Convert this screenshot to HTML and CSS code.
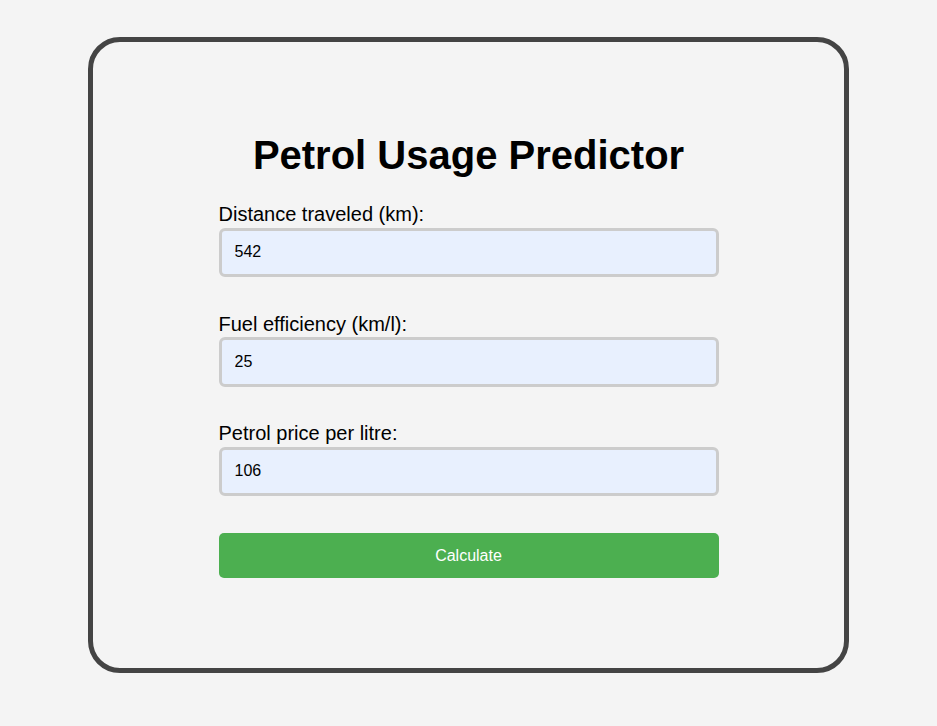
FILE: index.html
```html
<!DOCTYPE html>
<html lang="en">
<head>
<meta charset="utf-8">
<title>Petrol Usage Predictor</title>
<link rel="stylesheet" href="styles.css">
</head>
<body>
<main class="card">
  <form class="form">
    <h1 class="title">Petrol Usage Predictor</h1>
    <div class="field">
      <label class="label" for="distance">Distance traveled (km):</label>
      <input class="input" id="distance" type="text" value="542">
    </div>
    <div class="field">
      <label class="label" for="efficiency">Fuel efficiency (km/l):</label>
      <input class="input" id="efficiency" type="text" value="25">
    </div>
    <div class="field">
      <label class="label" for="price">Petrol price per litre:</label>
      <input class="input" id="price" type="text" value="106">
    </div>
    <button class="button" type="button">Calculate</button>
  </form>
</main>
</body>
</html>
```
FILE: styles.css
```css
* { box-sizing: border-box; }
html, body {
  margin: 0;
  padding: 0;
  background: #f4f4f4;
  font-family: "Liberation Sans", Arial, sans-serif;
  color: #000;
}
.card {
  width: 761px;
  height: 636px;
  margin: 37px 0 0 88px;
  border: 5px solid #444;
  border-radius: 32px;
  background: #f4f4f4;
  display: flex;
  justify-content: center;
  padding-top: 90px;
}
.form {
  width: 500px;
  display: flex;
  flex-direction: column;
}
.title {
  margin: 0 0 25px;
  font-size: 40px;
  font-weight: bold;
  line-height: 46px;
  text-align: center;
}
.field {
  display: flex;
  flex-direction: column;
  gap: 1.5px;
  margin-bottom: 35.5px;
}
.label {
  font-size: 20px;
  line-height: 23px;
}
.input {
  width: 500px;
  height: 49.5px;
  padding: 0 13px;
  border: 3px solid #ccc;
  border-radius: 6px;
  background: #e8f0fe;
  font-family: "Liberation Sans", Arial, sans-serif;
  font-size: 16px;
  color: #000;
  outline: none;
}
.field:last-of-type { margin-bottom: 37px; }
.button {
  width: 500px;
  height: 45px;
  border: none;
  border-radius: 5px;
  background: #4caf50;
  color: #fff;
  font-family: "Liberation Sans", Arial, sans-serif;
  font-size: 16px;
  cursor: pointer;
}
```
